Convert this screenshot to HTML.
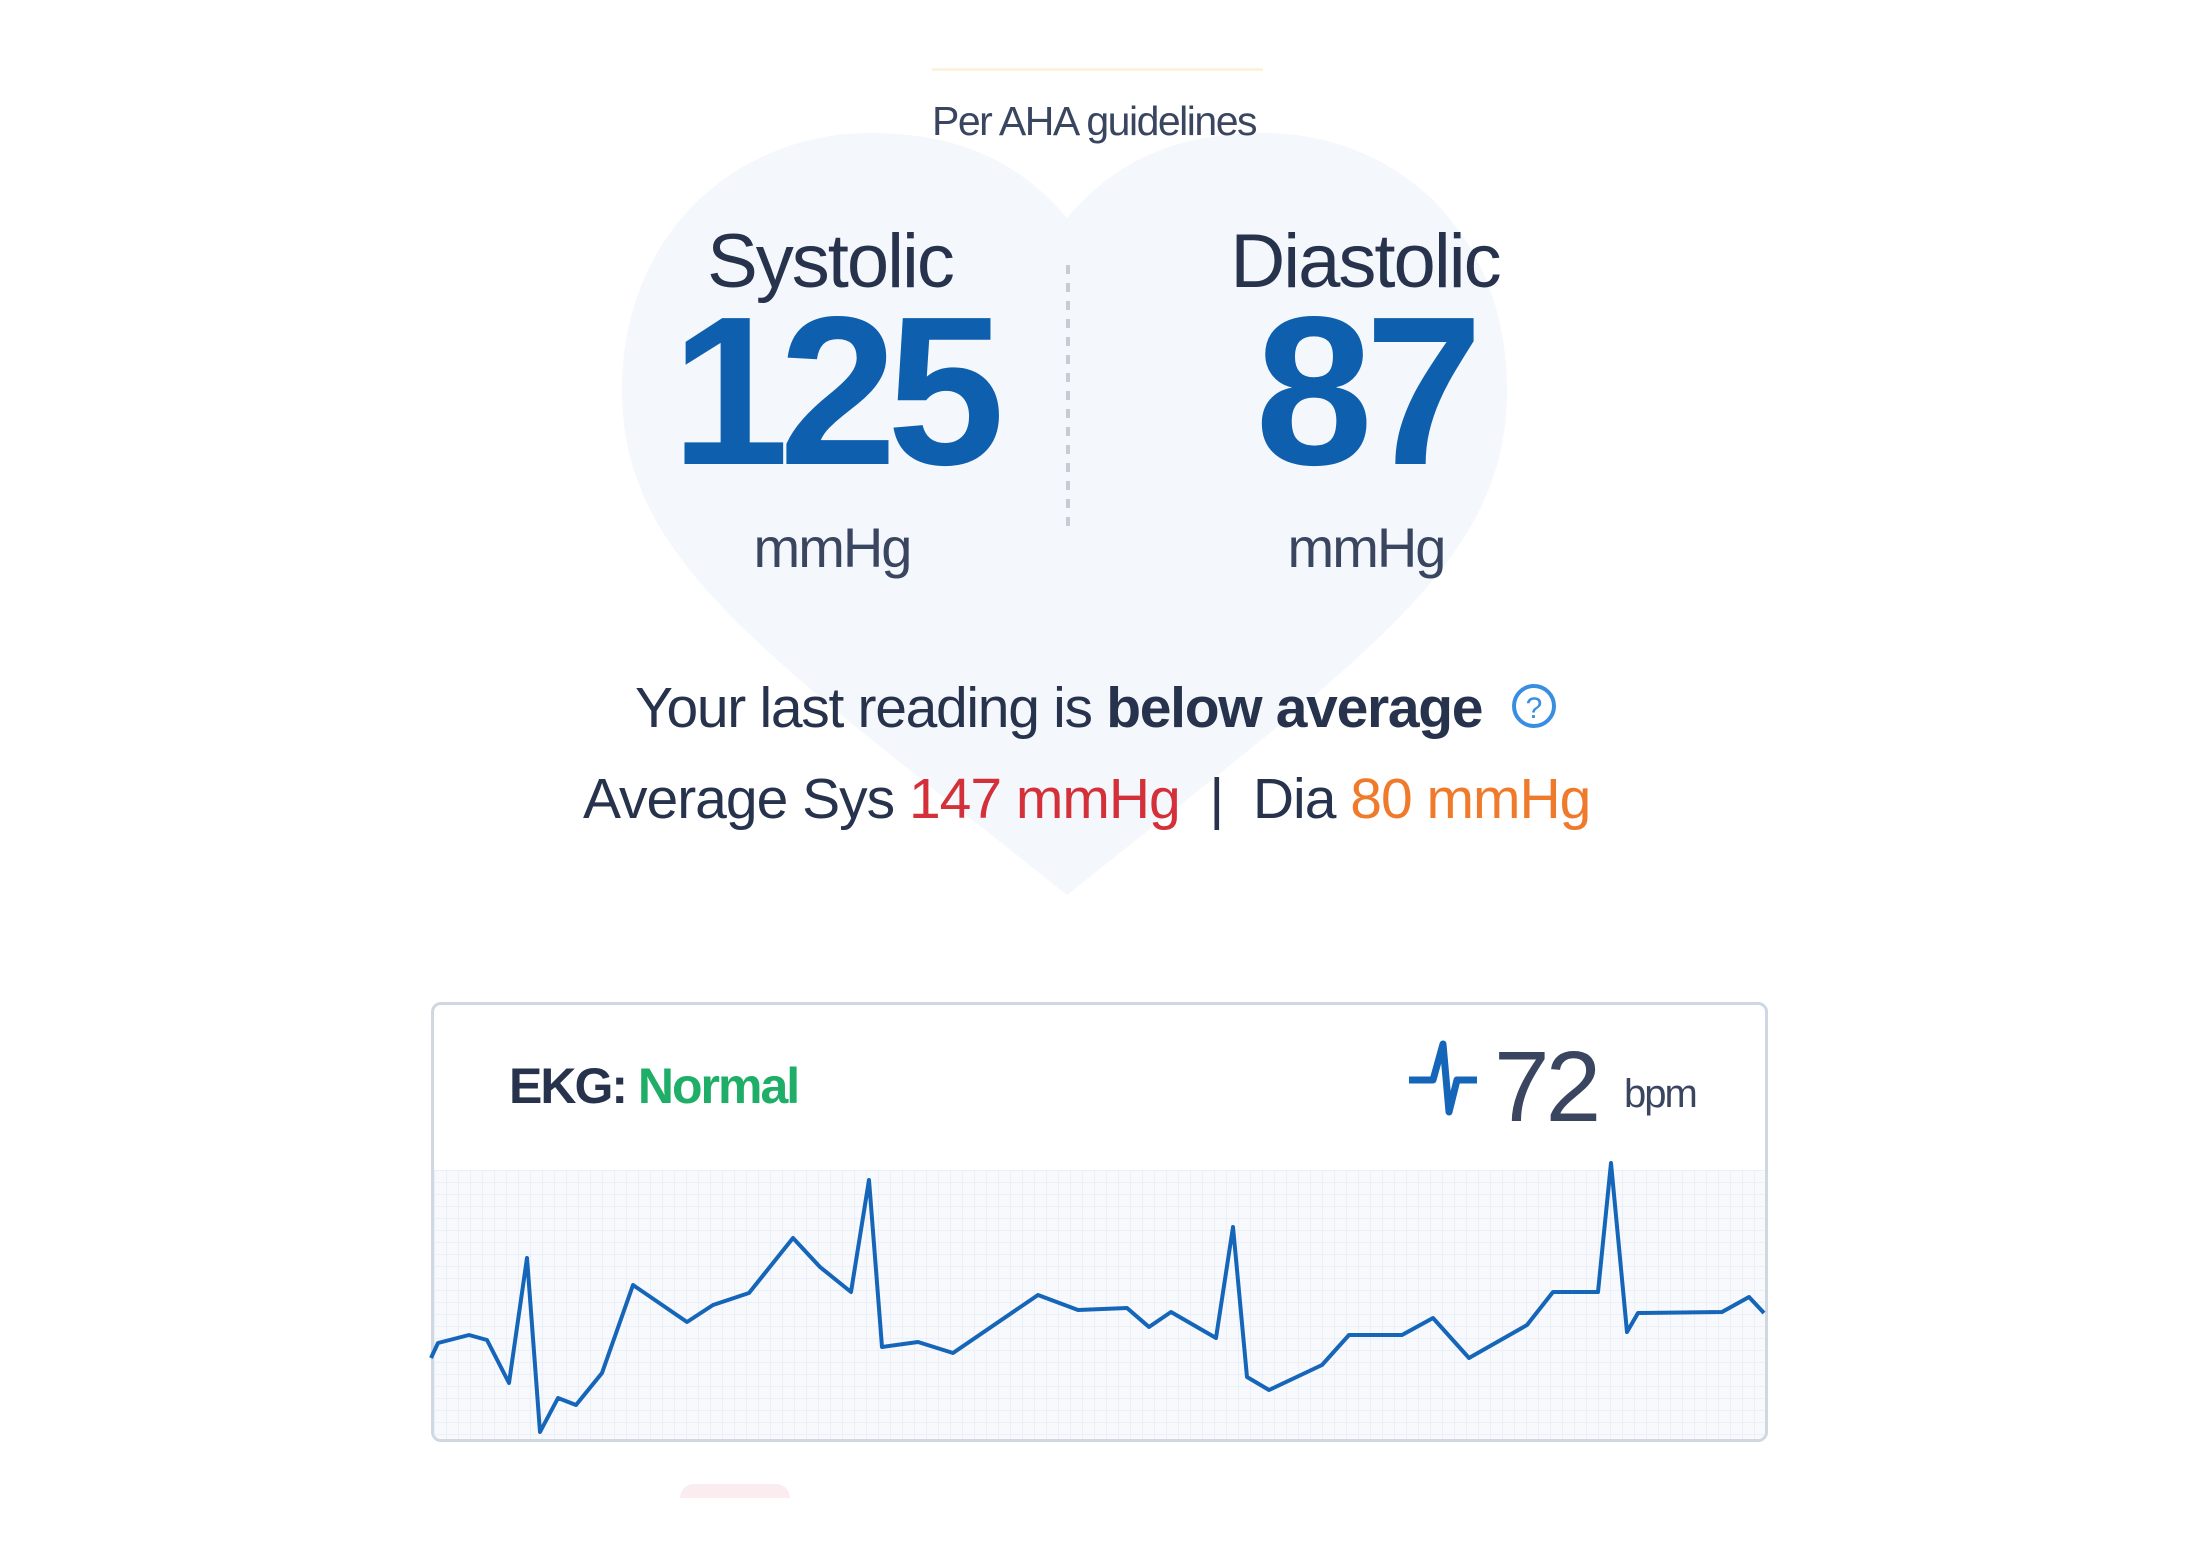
<!DOCTYPE html>
<html><head><meta charset="utf-8"><style>
html,body{margin:0;padding:0;background:#fff;width:2188px;height:1563px;overflow:hidden;font-family:"Liberation Sans",sans-serif;color:#27334d}
.a{position:absolute;white-space:nowrap}
.c{transform:translateX(-50%)}
</style></head><body>
<div class="a" style="left:932px;top:68px;width:331px;height:3px;background:#fbf3dc"></div>
<svg class="a" style="left:0;top:0" width="2188" height="1563">
<path d="M1067 218 C1010 150 940 133 870 133 C740 133 622 230 622 390 C622 560 760 650 1067 895 C1374 650 1507 560 1507 390 C1507 230 1394 133 1264 133 C1194 133 1124 150 1067 218 Z" fill="#f4f7fb"/>
<line x1="1068" y1="265" x2="1068" y2="532" stroke="#c4ccd6" stroke-width="4" stroke-dasharray="9 9"/>
</svg>
<div class="a c" style="left:1094px;top:98px;font-size:41px;letter-spacing:-1.5px;color:#3a4660">Per AHA guidelines</div>
<div class="a c" style="left:830px;top:218px;font-size:76px;letter-spacing:-2px">Systolic</div>
<div class="a c" style="left:1365px;top:218px;font-size:76px;letter-spacing:-2px">Diastolic</div>
<div class="a c" style="left:833px;top:285px;font-size:212px;font-weight:bold;color:#0e5fae;letter-spacing:-10px;line-height:1">125</div>
<div class="a c" style="left:1365px;top:285px;font-size:212px;font-weight:bold;color:#0e5fae;letter-spacing:-8px;line-height:1">87</div>
<div class="a c" style="left:832px;top:515px;font-size:56px;letter-spacing:-2px;color:#3a4660">mmHg</div>
<div class="a c" style="left:1366px;top:515px;font-size:56px;letter-spacing:-2px;color:#3a4660">mmHg</div>
<div class="a" style="left:635px;top:675px;font-size:57px;letter-spacing:-1.3px">Your last reading is <b>below average</b></div>
<svg class="a" style="left:1510px;top:682px" width="48" height="48"><circle cx="24" cy="24" r="20" fill="none" stroke="#3a8ee0" stroke-width="4"/><text x="24" y="36" text-anchor="middle" font-size="30" fill="#3a8ee0" font-family="Liberation Sans">?</text></svg>
<div class="a" style="left:583px;top:766px;font-size:57px;letter-spacing:-1px">Average Sys <span style="color:#d3303a">147 mmHg</span> &nbsp;| &nbsp;Dia <span style="color:#f07a2c">80 mmHg</span></div>
<div class="a" style="left:431px;top:1002px;width:1331px;height:434px;border:3px solid #cfd7e1;border-radius:10px;background:#fff;overflow:hidden">
<div style="position:absolute;left:0;top:165px;right:0;bottom:0;background-color:#f7f9fc;background-image:linear-gradient(#ebf0f6 1px,transparent 1px),linear-gradient(90deg,#ebf0f6 1px,transparent 1px);background-size:12px 12px"></div>
</div>
<div class="a" style="left:509px;top:1057px;font-size:50px;font-weight:bold;letter-spacing:-2px;color:#27334d">EKG: <span style="color:#1fae67">Normal</span></div>
<svg class="a" style="left:1405px;top:1040px" width="75" height="80"><path d="M4 40 H28 L38 4 L44 72 L52 40 H72" fill="none" stroke="#1565b8" stroke-width="7" stroke-linejoin="round"/></svg>
<div class="a" style="left:1494px;top:1030px;font-size:100px;letter-spacing:-4px;color:#3a4660">72</div>
<div class="a" style="left:1624px;top:1072px;font-size:40px;letter-spacing:-2px;color:#3a4660">bpm</div>
<svg class="a" style="left:0;top:0" width="2188" height="1563">
<polyline fill="none" stroke="#1565b8" stroke-width="4" stroke-linejoin="round" points="431,1358 438,1343 469,1335 487,1340 509,1383 527,1258 540,1432 558,1398 576,1405 602,1373 633,1285 687,1322 713,1305 749,1293 793,1238 820,1267 851,1292 869,1180 882,1347 918,1342 953,1353 1038,1295 1078,1310 1127,1308 1149,1327 1171,1312 1216,1338 1233,1227 1247,1377 1269,1390 1322,1365 1349,1335 1402,1335 1433,1318 1469,1358 1527,1325 1553,1292 1598,1292 1611,1163 1627,1332 1638,1313 1722,1312 1749,1297 1764,1313"/>
</svg>
<div class="a" style="left:680px;top:1484px;width:110px;height:14px;border-radius:55px 55px 0 0;background:#fbecf0"></div>
</body></html>
